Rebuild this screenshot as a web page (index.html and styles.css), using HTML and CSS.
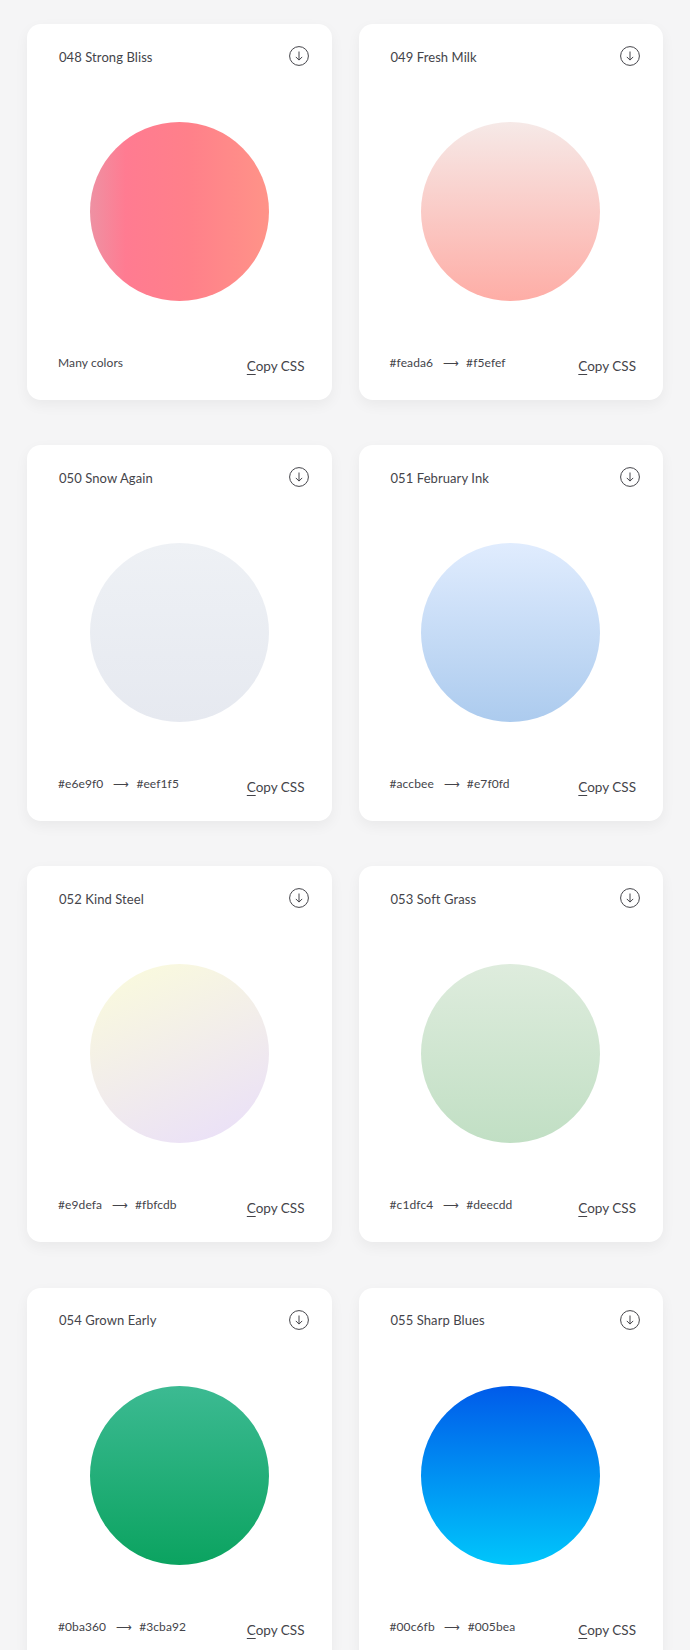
FILE: index.html

```html
<!DOCTYPE html>
<html lang="en">
<head>
    <meta charset="UTF-8">
    <meta name="viewport" content="width=device-width, initial-scale=1.0">
    <title>Gradients</title>
    <link rel="stylesheet" href="styles.css">
</head>
<body>
    <div class="grid">
        <div class="card">
            <div class="card-head">
                <span class="card-name">048 Strong Bliss</span>
                <svg class="save-icon" viewBox="0 0 20 20"><circle cx="10" cy="10" r="9.4"/><path d="M10 5.5v8.5M6.8 10.9l3.2 3.2 3.2-3.2"/></svg>
            </div>
            <div class="swatch strong-bliss"></div>
            <div class="card-foot">
                <div class="colors">Many colors</div>
                <a class="copy"><u>C</u>opy CSS</a>
            </div>
        </div>
        <div class="card">
            <div class="card-head">
                <span class="card-name">049 Fresh Milk</span>
                <svg class="save-icon" viewBox="0 0 20 20"><circle cx="10" cy="10" r="9.4"/><path d="M10 5.5v8.5M6.8 10.9l3.2 3.2 3.2-3.2"/></svg>
            </div>
            <div class="swatch fresh-milk"></div>
            <div class="card-foot">
                <div class="colors">#feada6 <span class="arrow">&#10230;</span> #f5efef</div>
                <a class="copy"><u>C</u>opy CSS</a>
            </div>
        </div>
        <div class="card">
            <div class="card-head">
                <span class="card-name">050 Snow Again</span>
                <svg class="save-icon" viewBox="0 0 20 20"><circle cx="10" cy="10" r="9.4"/><path d="M10 5.5v8.5M6.8 10.9l3.2 3.2 3.2-3.2"/></svg>
            </div>
            <div class="swatch snow-again"></div>
            <div class="card-foot">
                <div class="colors">#e6e9f0 <span class="arrow">&#10230;</span> #eef1f5</div>
                <a class="copy"><u>C</u>opy CSS</a>
            </div>
        </div>
        <div class="card">
            <div class="card-head">
                <span class="card-name">051 February Ink</span>
                <svg class="save-icon" viewBox="0 0 20 20"><circle cx="10" cy="10" r="9.4"/><path d="M10 5.5v8.5M6.8 10.9l3.2 3.2 3.2-3.2"/></svg>
            </div>
            <div class="swatch february-ink"></div>
            <div class="card-foot">
                <div class="colors">#accbee <span class="arrow">&#10230;</span> #e7f0fd</div>
                <a class="copy"><u>C</u>opy CSS</a>
            </div>
        </div>
        <div class="card">
            <div class="card-head">
                <span class="card-name">052 Kind Steel</span>
                <svg class="save-icon" viewBox="0 0 20 20"><circle cx="10" cy="10" r="9.4"/><path d="M10 5.5v8.5M6.8 10.9l3.2 3.2 3.2-3.2"/></svg>
            </div>
            <div class="swatch kind-steel"></div>
            <div class="card-foot">
                <div class="colors">#e9defa <span class="arrow">&#10230;</span> #fbfcdb</div>
                <a class="copy"><u>C</u>opy CSS</a>
            </div>
        </div>
        <div class="card">
            <div class="card-head">
                <span class="card-name">053 Soft Grass</span>
                <svg class="save-icon" viewBox="0 0 20 20"><circle cx="10" cy="10" r="9.4"/><path d="M10 5.5v8.5M6.8 10.9l3.2 3.2 3.2-3.2"/></svg>
            </div>
            <div class="swatch soft-grass"></div>
            <div class="card-foot">
                <div class="colors">#c1dfc4 <span class="arrow">&#10230;</span> #deecdd</div>
                <a class="copy"><u>C</u>opy CSS</a>
            </div>
        </div>
        <div class="card">
            <div class="card-head">
                <span class="card-name">054 Grown Early</span>
                <svg class="save-icon" viewBox="0 0 20 20"><circle cx="10" cy="10" r="9.4"/><path d="M10 5.5v8.5M6.8 10.9l3.2 3.2 3.2-3.2"/></svg>
            </div>
            <div class="swatch grown-early"></div>
            <div class="card-foot">
                <div class="colors">#0ba360 <span class="arrow">&#10230;</span> #3cba92</div>
                <a class="copy"><u>C</u>opy CSS</a>
            </div>
        </div>
        <div class="card">
            <div class="card-head">
                <span class="card-name">055 Sharp Blues</span>
                <svg class="save-icon" viewBox="0 0 20 20"><circle cx="10" cy="10" r="9.4"/><path d="M10 5.5v8.5M6.8 10.9l3.2 3.2 3.2-3.2"/></svg>
            </div>
            <div class="swatch sharp-blues"></div>
            <div class="card-foot">
                <div class="colors">#00c6fb <span class="arrow">&#10230;</span> #005bea</div>
                <a class="copy"><u>C</u>opy CSS</a>
            </div>
        </div>
    </div>
</body>
</html>
```

FILE: styles.css

```css
html {
    height: 100%;
    overflow: hidden;
}
body {
    margin: 0;
    background-color: #f5f5f6;
    font-family: 'Lato', 'Open Sans', sans-serif;
    color: #44444a;
}
.grid {
    display: grid;
    grid-template-columns: 304.5px 304.5px;
    column-gap: 27px;
    row-gap: 45.2px;
    padding: 24px 0 0 27px;
}
.card {
    height: 376px;
    padding: 0 27px 0 32px;
    box-sizing: border-box;
    background: white;
    border-radius: 14px;
    box-shadow: 0 5px 14px rgba(0,0,0,0.05);
    display: flex;
    flex-direction: column;
}
.card-head {
    display: flex;
    justify-content: space-between;
    align-items: center;
    height: 20px;
    margin-top: 22px;
    margin-right: -4px;
}
.card-name {
    font-size: 13px;
    letter-spacing: 0.08px;
    margin-top: 1px;
}
.save-icon {
    width: 20px;
    height: 20px;
    fill: none;
    stroke: #44444a;
    stroke-width: 1;
}
.swatch {
    width: 179px;
    height: 179px;
    border-radius: 50%;
    margin: 56px 0 0 30.5px;
}
.card-foot {
    display: flex;
    justify-content: space-between;
    align-items: flex-start;
    margin: 54px 0 0 -1px;
}
.colors {
    font-size: 12px;
    letter-spacing: 0.1px;
}
.arrow {
    font-size: 10.5px;
    margin: 0 4px 0 6.5px;
}
.copy {
    font-size: 13.5px;
    margin-top: 3px;
}
.copy u {
    text-underline-offset: 3px;
}
.strong-bliss { background: linear-gradient(to right, #ee91a3 0%, #ff7b91 20%, #ff808a 55%, #ff9388 100%); }
.fresh-milk { background: linear-gradient(to top, #feada6 0%, #f6e9e7 100%); }
.snow-again { background: linear-gradient(to top, #e6e9f0 0%, #eef1f5 100%); }
.february-ink { background: linear-gradient(to top, #accbee 0%, #e0ecfe 100%); }
.kind-steel { background: linear-gradient(-25deg, #e9defa 0%, #fbfcdb 100%); }
.soft-grass { background: linear-gradient(to top, #c1dfc4 0%, #deecdd 100%); }
.grown-early { background: linear-gradient(to top, #0ba360 0%, #3cba92 100%); }
.sharp-blues { background: linear-gradient(to top, #00c6fb 0%, #005bea 100%); }
```
